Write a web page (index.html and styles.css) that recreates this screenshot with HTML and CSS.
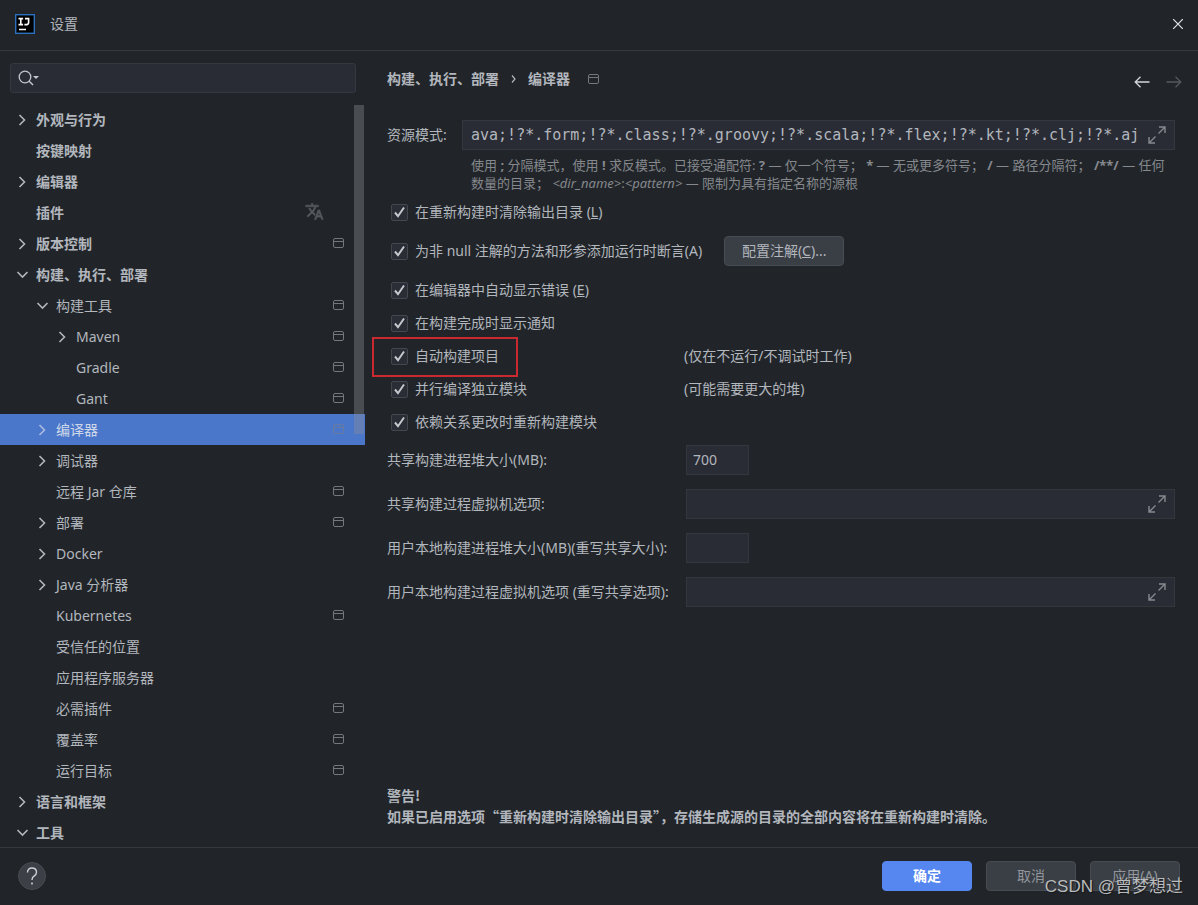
FILE: index.html
```html
<!DOCTYPE html>
<html lang="zh-CN">
<head>
<meta charset="utf-8">
<title>设置</title>
<link rel="stylesheet" href="styles.css">
</head>
<body>
<svg class="sprite" aria-hidden="true">
  <symbol id="right" viewBox="0 0 16 16"><path d="M5.5 3l5 5-5 5" fill="none" stroke="currentColor" stroke-width="1.6"/></symbol>
  <symbol id="down" viewBox="0 0 16 16"><path d="M3.500 5l5 5 5-5" fill="none" stroke="currentColor" stroke-width="1.6"/></symbol>
  <symbol id="project" viewBox="0 0 11 10"><rect x=".5" y=".5" width="10" height="9" rx="1.5" fill="none" stroke="currentColor"/><path d="M1 3.5h9" stroke="currentColor"/></symbol>
  <symbol id="expand" viewBox="0 0 18 18"><path d="M10.5 7.500L17 1M11 1h6v6M7.500 10.500L1 17M1 11v6h6" fill="none" stroke="currentColor" stroke-width="1.4"/></symbol>
</svg>

<header class="titlebar">
  <svg class="logo" viewBox="0 0 20 20" aria-hidden="true"><rect x=".7" y=".7" width="18.600" height="18.600" fill="#000" stroke="#2a72c0" stroke-width="1.4"/><path d="M3.500 4.600h4.600M5.800 4.600v6M3.500 10.600h4.600M10 4.600h3.600v4q0 2-2 2h-2.200M4 15.500h7" fill="none" stroke="#fff" stroke-width="1.600"/></svg>
  <h1 class="title">设置</h1>
  <button class="icon-btn close" aria-label="关闭"><svg width="10" height="10" viewBox="0 0 10 10"><path d="M0 0l10 10M10 0L0 10" stroke="#e4e5e7" stroke-width="1.200"/></svg></button>
</header>

<main class="main">
  <aside class="sidebar">
    <div class="search">
      <svg width="22" height="16" viewBox="0 0 22 16" aria-hidden="true"><circle cx="7" cy="7" r="5.800" fill="none" stroke="#c3c6cc" stroke-width="1.300"/><path d="M11 11l4 4" stroke="#c3c6cc" stroke-width="1.400"/><path d="M15 6h6l-3 3z" fill="#c3c6cc"/></svg>
      <input type="text" aria-label="搜索设置">
    </div>
    <div class="tree-wrap">
      <ul class="tree" role="tree">
        <li class="item top" role="treeitem"><svg class="chev"><use href="#right"/></svg><span>外观与行为</span></li>
        <li class="item top" role="treeitem"><i class="chev"></i><span>按键映射</span></li>
        <li class="item top" role="treeitem"><svg class="chev"><use href="#right"/></svg><span>编辑器</span></li>
        <li class="item top" role="treeitem"><i class="chev"></i><span>插件</span><svg class="lang" viewBox="0 0 24 24"><path fill="currentColor" stroke="currentColor" stroke-width=".8" d="M12.870 15.070l-2.540-2.510.030-.030A17.520 17.520 0 0 0 14.070 6H17V4h-7V2H8v2H1v2h11.170C11.500 7.920 10.440 9.750 9 11.350 8.070 10.320 7.300 9.190 6.690 8h-2c.730 1.630 1.730 3.170 2.980 4.560l-5.090 5.020L4 19l5-5 3.110 3.110.760-2.040zM18.500 10h-2L12 22h2l1.120-3h4.750L21 22h2l-4.500-12zm-2.620 7l1.620-4.330L19.120 17h-3.240z"/></svg></li>
        <li class="item top" role="treeitem"><svg class="chev"><use href="#right"/></svg><span>版本控制</span><svg class="proj"><use href="#project"/></svg></li>
        <li class="item top" role="treeitem"><svg class="chev"><use href="#down"/></svg><span>构建、执行、部署</span></li>
        <li class="item l1" role="treeitem"><svg class="chev"><use href="#down"/></svg><span>构建工具</span><svg class="proj"><use href="#project"/></svg></li>
        <li class="item l2" role="treeitem"><svg class="chev"><use href="#right"/></svg><span>Maven</span><svg class="proj"><use href="#project"/></svg></li>
        <li class="item l2" role="treeitem"><i class="chev"></i><span>Gradle</span><svg class="proj"><use href="#project"/></svg></li>
        <li class="item l2" role="treeitem"><i class="chev"></i><span>Gant</span><svg class="proj"><use href="#project"/></svg></li>
        <li class="item l1 selected" role="treeitem" aria-selected="true"><svg class="chev"><use href="#right"/></svg><span>编译器</span><svg class="proj"><use href="#project"/></svg></li>
        <li class="item l1" role="treeitem"><svg class="chev"><use href="#right"/></svg><span>调试器</span></li>
        <li class="item l1" role="treeitem"><i class="chev"></i><span>远程 Jar 仓库</span><svg class="proj"><use href="#project"/></svg></li>
        <li class="item l1" role="treeitem"><svg class="chev"><use href="#right"/></svg><span>部署</span><svg class="proj"><use href="#project"/></svg></li>
        <li class="item l1" role="treeitem"><svg class="chev"><use href="#right"/></svg><span>Docker</span></li>
        <li class="item l1" role="treeitem"><svg class="chev"><use href="#right"/></svg><span>Java 分析器</span></li>
        <li class="item l1" role="treeitem"><i class="chev"></i><span>Kubernetes</span><svg class="proj"><use href="#project"/></svg></li>
        <li class="item l1" role="treeitem"><i class="chev"></i><span>受信任的位置</span></li>
        <li class="item l1" role="treeitem"><i class="chev"></i><span>应用程序服务器</span></li>
        <li class="item l1" role="treeitem"><i class="chev"></i><span>必需插件</span><svg class="proj"><use href="#project"/></svg></li>
        <li class="item l1" role="treeitem"><i class="chev"></i><span>覆盖率</span><svg class="proj"><use href="#project"/></svg></li>
        <li class="item l1" role="treeitem"><i class="chev"></i><span>运行目标</span><svg class="proj"><use href="#project"/></svg></li>
        <li class="item top" role="treeitem"><svg class="chev"><use href="#right"/></svg><span>语言和框架</span></li>
        <li class="item top" role="treeitem"><svg class="chev"><use href="#down"/></svg><span>工具</span></li>
      </ul>
      <div class="thumb"></div>
    </div>
  </aside>

  <section class="content">
    <div class="page-head">
      <nav class="crumbs"><span>构建、执行、部署</span><svg width="5" height="8" viewBox="0 0 5 8" aria-hidden="true"><path d="M1 .5L4 4 1 7.500" fill="none" stroke="currentColor" stroke-width="1.200"/></svg><span>编译器</span><svg class="proj"><use href="#project"/></svg></nav>
      <div class="history">
        <button class="icon-btn" aria-label="后退"><svg width="16" height="12" viewBox="0 0 16 12"><path d="M15.500 6H1.500M6.500 .7L1.200 6l5.300 5.300" fill="none" stroke="#d3d5d9" stroke-width="1.300"/></svg></button>
        <button class="icon-btn" aria-label="前进" disabled><svg width="16" height="12" viewBox="0 0 16 12"><path d="M.5 6h14M9.500 .7L14.800 6l-5.300 5.300" fill="none" stroke="#55585d" stroke-width="1.300"/></svg></button>
      </div>
    </div>

    <div class="pattern">
      <label for="patterns">资源模式:</label>
      <div class="field mono"><input id="patterns" type="text" value="ava;!?*.form;!?*.class;!?*.groovy;!?*.scala;!?*.flex;!?*.kt;!?*.clj;!?*.aj"><svg class="expand"><use href="#expand"/></svg></div>
      <p class="hint">使用 <b>;</b> 分隔模式，使用 <b>!</b> 求反模式。已接受通配符: <b>?</b> — 仅一个符号； <b>*</b> — 无或更多符号； <b>/</b> — 路径分隔符； <b>/**/</b> — 任何<br>数量的目录； <em>&lt;dir_name&gt;</em>:<em>&lt;pattern&gt;</em> — 限制为具有指定名称的源根</p>
    </div>

    <div class="checks">
      <div class="check-row"><label class="check"><input type="checkbox" checked><span>在重新构建时清除输出目录 (<u>L</u>)</span></label></div>
      <div class="check-row tall"><label class="check"><input type="checkbox" checked><span>为非 null 注解的方法和形参添加运行时断言(A)</span></label><button class="btn annotations">配置注解(<u>C</u>)...</button></div>
      <div class="check-row"><label class="check"><input type="checkbox" checked><span>在编辑器中自动显示错误 (<u>E</u>)</span></label></div>
      <div class="check-row"><label class="check"><input type="checkbox" checked><span>在构建完成时显示通知</span></label></div>
      <div class="check-row noted"><label class="check marked"><input type="checkbox" checked><span>自动构建项目</span></label><span>(仅在不运行/不调试时工作)</span></div>
      <div class="check-row noted"><label class="check"><input type="checkbox" checked><span>并行编译独立模块</span></label><span>(可能需要更大的堆)</span></div>
      <div class="check-row"><label class="check"><input type="checkbox" checked><span>依赖关系更改时重新构建模块</span></label></div>
    </div>

    <div class="form">
      <label for="heap">共享构建进程堆大小(MB):</label>
      <div class="field short"><input id="heap" type="text" value="700"></div>
      <label for="vm">共享构建过程虚拟机选项:</label>
      <div class="field"><input id="vm" type="text"><svg class="expand"><use href="#expand"/></svg></div>
      <label for="user-heap">用户本地构建进程堆大小(MB)(重写共享大小):</label>
      <div class="field short"><input id="user-heap" type="text"></div>
      <label for="user-vm">用户本地构建过程虚拟机选项 (重写共享选项):</label>
      <div class="field"><input id="user-vm" type="text"><svg class="expand"><use href="#expand"/></svg></div>
    </div>

    <p class="warning">警告!<br>如果已启用选项“重新构建时清除输出目录”，存储生成源的目录的全部内容将在重新构建时清除。</p>
  </section>
</main>

<footer class="footer">
  <button class="help" aria-label="帮助"><svg width="12" height="18" viewBox="0 0 12 18"><path d="M1.500 5.500Q1.500 1 6 1t4.500 4.200Q10.500 7.500 8 9.200 6 10.500 6 13" fill="none" stroke="#ced0d4" stroke-width="1.400"/><circle cx="6" cy="16.500" r="1" fill="#ced0d4"/></svg></button>
  <div class="actions">
    <button class="btn action primary">确定</button>
    <button class="btn action">取消</button>
    <button class="btn action">应用(<u>A</u>)</button>
  </div>
  <div class="watermark">CSDN @曾梦想过</div>
</footer>
</body>
</html>
```

FILE: styles.css
```css
:root {
  --bg: #212529;
  --field: #292c34;
  --line: #363a3f;
  --text: #b2b6bd;
  --muted: #85888d;
  --ui: "Noto Sans", "Noto Sans CJK SC", sans-serif;
}

* { box-sizing: border-box; }

body {
  margin: 0;
  height: 100vh;
  display: flex;
  flex-direction: column;
  overflow: hidden;
  background: var(--bg);
  color: var(--text);
  font: 14px/20px var(--ui);
}

button, input { font: inherit; color: inherit; }
p, h1, ul { margin: 0; padding: 0; }
svg { flex: none; display: block; }
.sprite { position: absolute; width: 0; height: 0; }

.icon-btn {
  display: flex;
  padding: 0;
  border: 0;
  background: none;
}

/* Title bar */
.titlebar {
  flex: none;
  display: flex;
  align-items: center;
  height: 51px;
  padding: 0 15px 2px;
  border-bottom: 1px solid var(--line);
}
.logo { width: 20px; height: 20px; }
.title { margin-left: 15px; font-size: 14px; font-weight: 400; }
.close { margin-left: auto; }

.main { flex: 1; min-height: 0; display: flex; }

/* Settings tree */
.sidebar {
  flex: none;
  width: 365px;
  display: flex;
  flex-direction: column;
  padding-top: 12px;
}
.search {
  flex: none;
  display: flex;
  align-items: center;
  gap: 4px;
  height: 30px;
  margin: 0 9px 11px 10px;
  padding: 0 7px;
  background: var(--field);
  border: 1px solid #34383f;
  border-radius: 3px;
}
.search input { flex: 1; min-width: 0; border: 0; background: none; }
.tree-wrap { position: relative; flex: 1; min-height: 0; overflow: hidden; }
.tree { list-style: none; }
.item {
  display: flex;
  align-items: center;
  gap: 6px;
  height: 31px;
  padding: 0 21px 0 14px;
}
.top { font-weight: 700; }
.l1 { padding-left: 34px; }
.l2 { padding-left: 54px; }
.chev { flex: none; width: 16px; height: 16px; }
.proj { width: 11px; height: 10px; color: #74777b; }
.item .proj { margin: 0 0 2px auto; }
.lang { width: 19px; height: 19px; margin: 0 20px 2px auto; color: #55585c; }
.selected { background: #4b77cb; color: #ced7e8; }
.selected .chev { color: #a9bbdf; }
.selected .proj { color: #687a9e; }
.thumb {
  position: absolute;
  top: 1px;
  right: 1px;
  width: 10px;
  height: 329px;
  background: rgba(140, 142, 145, .38);
}

/* Page */
.content {
  flex: 1;
  min-width: 0;
  display: flex;
  flex-direction: column;
  padding: 18px 23px 20px 22px;
}
.page-head { display: flex; justify-content: space-between; align-items: center; }
.crumbs { display: flex; align-items: center; font-weight: 700; gap: 12px; }
.crumbs .proj { margin-left: 6px; }
.history { display: flex; gap: 16px; margin: 6px -7px 0 0; }

.pattern {
  display: grid;
  grid-template-columns: 75px 1fr;
  align-items: center;
  row-gap: 6px;
  margin-top: 31px;
}
.field {
  display: flex;
  align-items: center;
  height: 30px;
  padding: 0 8px 0 6px;
  background: var(--field);
  border: 1px solid #34373e;
}
.field input { flex: 1; min-width: 0; padding: 0; border: 0; background: none; outline: 0; }
.short { width: 63px; }
.mono { padding-left: 8px; }
.mono input { font: 15px/20px "DejaVu Sans Mono", monospace; }
.expand { width: 18px; height: 18px; color: #85888e; }
.hint {
  grid-column: 2;
  padding-left: 9px;
  color: var(--muted);
  font-size: 13px;
  line-height: 18px;
}

.checks { display: flex; flex-direction: column; gap: 9px; margin-top: 8px; }
.check-row { display: flex; align-items: center; height: 24px; }
.tall { height: 36px; }
.noted { display: grid; grid-template-columns: 297px 1fr; }
.check { display: flex; align-items: center; gap: 7px; padding-left: 4px; justify-self: start; }
.check input {
  appearance: none;
  width: 17px;
  height: 17px;
  margin: 0;
  background: #2a2d35;
  border: 1px solid #43474e;
  border-radius: 2px;
}
.check input:checked {
  background: #2a2d35 url("data:image/svg+xml,%3Csvg xmlns='http://www.w3.org/2000/svg' viewBox='0 0 15 15'%3E%3Cpath d='M3 7.500l3 3.700L12 2.500' fill='none' stroke='%23c6c9ce' stroke-width='2'/%3E%3C/svg%3E") center / 15px 15px no-repeat;
}
.marked { position: relative; }
.marked::after {
  content: "";
  position: absolute;
  inset: -9px -19px -11px -15px;
  border: 2px solid #c9292f;
}

.btn {
  height: 30px;
  padding: 0 15px;
  background: #3a3e45;
  border: 1px solid #474b52;
  border-radius: 4px;
}
.annotations { width: 120px; margin-left: 22px; }

.form {
  display: grid;
  grid-template-columns: 299px 1fr;
  align-items: center;
  row-gap: 14px;
  margin-top: 11px;
}
.warning {
  margin-top: auto;
  font-family: "Noto Sans CJK SC", sans-serif;
  font-weight: 700;
  line-height: 21px;
}

/* Footer */
.footer {
  position: relative;
  flex: none;
  display: flex;
  align-items: center;
  justify-content: space-between;
  height: 58px;
  padding: 0 18px 2px;
  border-top: 1px solid var(--line);
}
.help {
  display: flex;
  align-items: center;
  justify-content: center;
  width: 28px;
  height: 28px;
  padding: 0;
  background: #3c4046;
  border: 1px solid #484c52;
  border-radius: 50%;
}
.actions { display: flex; gap: 14px; }
.action { width: 90px; color: #92969c; }
.primary { background: #5687f0; border-color: #5687f0; color: #fff; font-weight: 700; }
.watermark {
  position: absolute;
  right: 15px;
  bottom: 6px;
  color: #b9bbbd;
  font: 17px/24px "Liberation Sans", "Noto Sans CJK SC", sans-serif;
  text-shadow: 1px 1px 1px #17191c;
}
```
